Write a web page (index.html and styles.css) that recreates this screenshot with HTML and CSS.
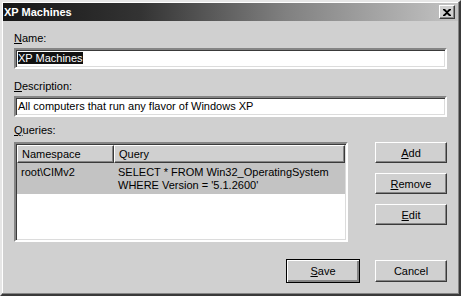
FILE: index.html
```html
<!DOCTYPE html>
<html lang="en">
  <head>
    <meta charset="UTF-8" />
    <title>XP Machines</title>
    <link rel="stylesheet" href="styles.css">
  </head>
  <body>
    <div class="window">
      <div class="titlebar">
        <span class="title">XP Machines</span>
        <button class="close-btn" aria-label="Close">
          <svg width="8" height="7" viewBox="0 0 8 7">
            <path d="M0 0h2l2 2 2-2h2v1L5 3.5 8 6v1H6L4 5 2 7H0V6l3-2.5L0 1z" fill="#000" />
          </svg>
        </button>
      </div>

      <div class="form">
        <label class="field-label"><u>N</u>ame:</label>
        <div class="textbox"><span class="selected">XP Machines</span></div>

        <label class="field-label desc-label"><u>D</u>escription:</label>
        <div class="textbox">All computers that run any flavor of Windows XP</div>

        <label class="field-label queries-label"><u>Q</u>ueries:</label>
        <div class="queries">
          <div class="listview">
            <div class="list-header">
              <div class="col-head col-ns">Namespace</div>
              <div class="col-head col-query">Query</div>
            </div>
            <div class="list-row">
              <div class="col-ns">root\CIMv2</div>
              <div class="col-query">
                SELECT * FROM Win32_OperatingSystem<br />
                WHERE Version = '5.1.2600'
              </div>
            </div>
          </div>

          <div class="side-buttons">
            <button class="btn"><u>A</u>dd</button>
            <button class="btn"><u>R</u>emove</button>
            <button class="btn"><u>E</u>dit</button>
          </div>
        </div>

        <div class="footer">
          <button class="btn btn-default"><u>S</u>ave</button>
          <button class="btn">Cancel</button>
        </div>
      </div>
    </div>
  </body>
</html>
```

FILE: styles.css
```css
:root {
  --face: #d0d0d0;
  --shadow: #858585;
  --dark: #3a3a3a;
  --light: #ffffff;
  --row: #c3c3c3;
}

* {
  box-sizing: border-box;
}

body {
  margin: 0;
  font-family: "Liberation Sans", Arial, sans-serif;
  font-size: 11px;
  line-height: 13px;
  color: #000;
  background: var(--face);
}

u {
  text-decoration: underline;
  text-underline-offset: 1px;
}

.window {
  width: 461px;
  height: 296px;
  padding: 1px;
  background: var(--face);
  border: 2px solid;
  border-color: #e6e6e6 var(--dark) var(--dark) #e6e6e6;
  box-shadow: inset -1px -1px 0 var(--shadow), inset 1px 1px 0 var(--light);
}

.titlebar {
  height: 18px;
  display: flex;
  align-items: center;
  justify-content: space-between;
  padding: 0 3px 0 1px;
  background: linear-gradient(90deg, #161616 0%, #333 30%, #808080 62%, #c4c4c4 100%);
}

.title {
  color: #fff;
  font-weight: bold;
  font-size: 11px;
}

.close-btn {
  width: 16px;
  height: 14px;
  padding: 0;
  display: flex;
  align-items: center;
  justify-content: center;
  background: var(--face);
  border: 1px solid;
  border-color: var(--light) var(--dark) var(--dark) var(--light);
  box-shadow: inset -1px -1px 0 var(--shadow);
}

.form {
  padding: 11px 11px 0 11px;
  display: flex;
  flex-direction: column;
}

.field-label {
  display: block;
  height: 13px;
  margin-bottom: 3px;
}

.desc-label {
  margin-top: 11px;
}

.queries-label {
  margin-top: 7px;
  margin-bottom: 5px;
}

.textbox {
  height: 21px;
  padding: 2px 2px 0;
  background: #fff;
  border: 2px solid;
  border-color: var(--shadow) var(--light) var(--light) var(--shadow);
  box-shadow: inset 1px 1px 0 var(--dark), inset -1px -1px 0 #dcdcdc;
  white-space: nowrap;
}

.selected {
  background: #111;
  color: #fff;
}

.queries {
  display: flex;
  gap: 27px;
}

.listview {
  width: 334px;
  height: 100px;
  background: #fff;
  border: 2px solid;
  border-color: var(--shadow) var(--light) var(--light) var(--shadow);
  box-shadow: inset 1px 1px 0 var(--dark), inset -1px -1px 0 #dcdcdc;
  padding: 1px 1px 0;
}

.list-header {
  display: flex;
  height: 18px;
}

.col-head {
  display: flex;
  align-items: center;
  background: var(--face);
  border: 1px solid;
  border-color: var(--light) var(--dark) var(--dark) var(--light);
  box-shadow: inset -1px -1px 0 var(--shadow);
}

.col-ns {
  width: 97px;
  padding-left: 4px;
  flex-shrink: 0;
}

.col-query {
  flex: 1;
  padding-left: 4px;
}

.list-row {
  display: flex;
  background: var(--row);
  padding: 3px 0 4px;
  height: 31px;
}

.side-buttons {
  display: flex;
  flex-direction: column;
  gap: 10px;
}

.btn {
  width: 72px;
  height: 21px;
  padding: 0;
  font-family: inherit;
  font-size: 11px;
  color: #000;
  background: var(--face);
  border: 1px solid;
  border-color: var(--light) var(--dark) var(--dark) var(--light);
  box-shadow: inset -1px -1px 0 var(--shadow);
}

.footer .btn {
  height: 22px;
}

.footer .btn-default {
  width: 74px;
  height: 24px;
  outline: none;
  border: 1px solid #000;
  box-shadow: inset 1px 1px 0 var(--light), inset -2px -2px 0 var(--shadow);
}

.footer {
  display: flex;
  justify-content: flex-end;
  align-items: center;
  gap: 15px;
  margin-top: 17px;
}
```
